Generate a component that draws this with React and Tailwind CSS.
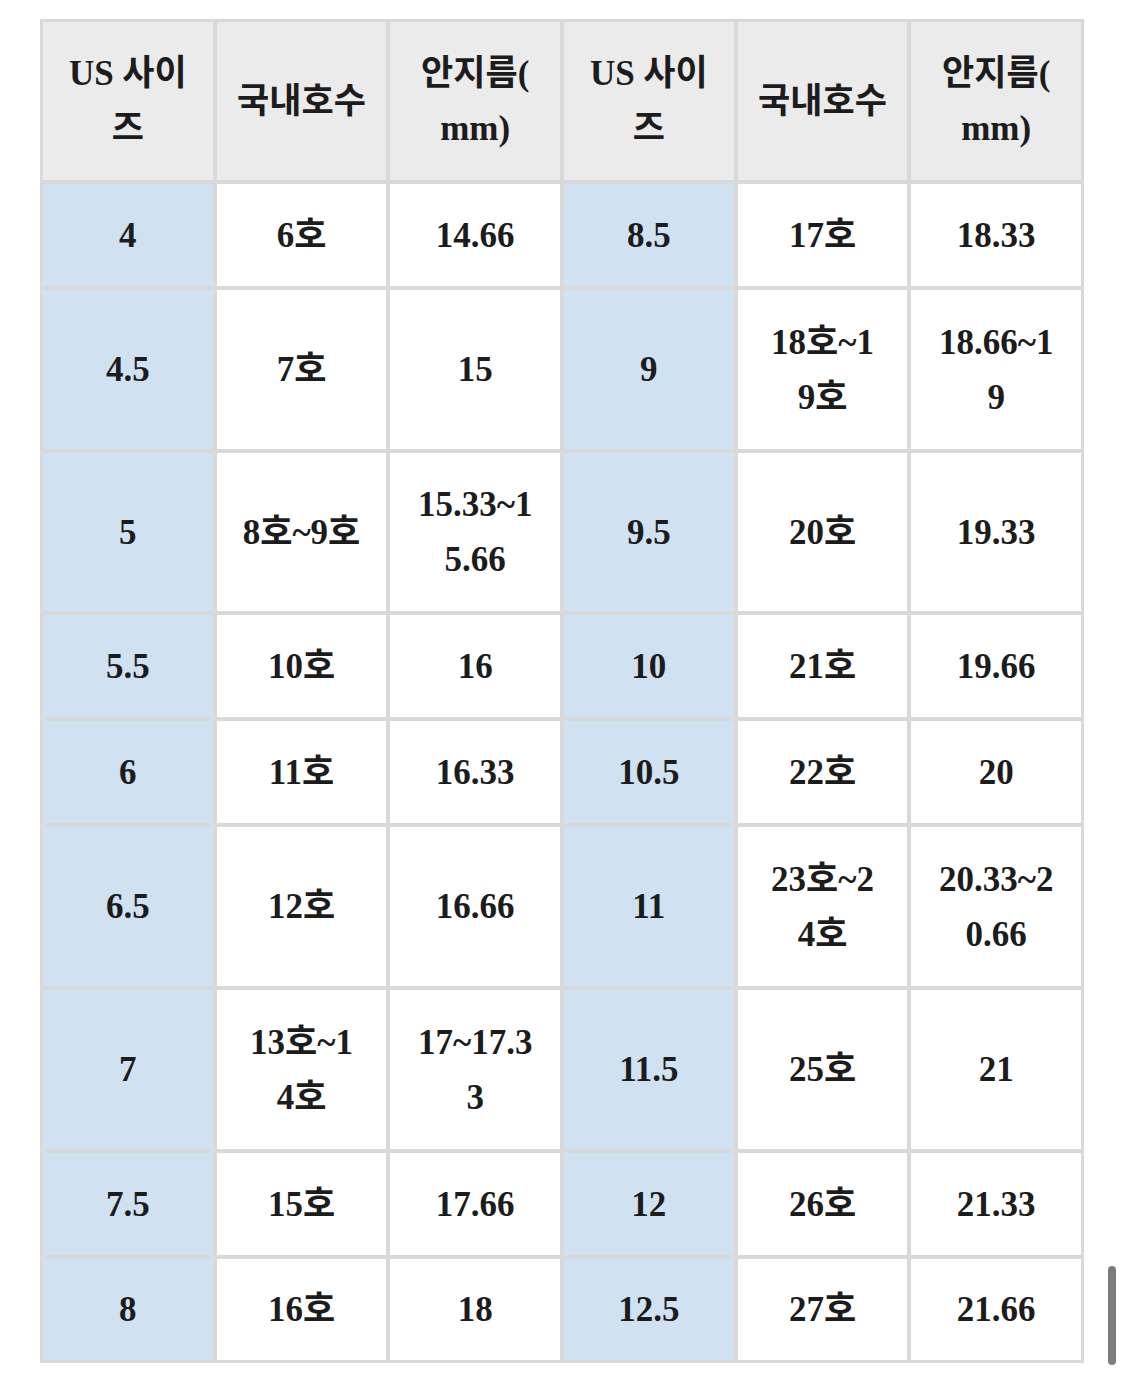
import React from 'react';

// 각 셀은 원본처럼 줄바꿈된 상태로 배열에 넣어 둠
const header = [['US 사이', '즈'], ['국내호수'], ['안지름(', 'mm)'], ['US 사이', '즈'], ['국내호수'], ['안지름(', 'mm)']];

const rows = [
  { h: 'h-[102px]', cells: [['4'], ['6호'], ['14.66'], ['8.5'], ['17호'], ['18.33']] },
  { h: 'h-[159px]', cells: [['4.5'], ['7호'], ['15'], ['9'], ['18호~1', '9호'], ['18.66~1', '9']] },
  { h: 'h-[158px]', cells: [['5'], ['8호~9호'], ['15.33~1', '5.66'], ['9.5'], ['20호'], ['19.33']] },
  { h: 'h-[102px]', cells: [['5.5'], ['10호'], ['16'], ['10'], ['21호'], ['19.66']] },
  { h: 'h-[102px]', cells: [['6'], ['11호'], ['16.33'], ['10.5'], ['22호'], ['20']] },
  { h: 'h-[159px]', cells: [['6.5'], ['12호'], ['16.66'], ['11'], ['23호~2', '4호'], ['20.33~2', '0.66']] },
  { h: 'h-[159px]', cells: [['7'], ['13호~1', '4호'], ['17~17.3', '3'], ['11.5'], ['25호'], ['21']] },
  { h: 'h-[102px]', cells: [['7.5'], ['15호'], ['17.66'], ['12'], ['26호'], ['21.33']] },
  { h: 'h-[101px]', cells: [['8'], ['16호'], ['18'], ['12.5'], ['27호'], ['21.66']] },
];

const Cell = ({ lines, className }) => (
  <div className={`flex flex-col items-center justify-center text-center ${className}`}>
    {lines.map((line, i) => (
      <span key={i} className="whitespace-nowrap">{line}</span>
    ))}
  </div>
);

const App = () => {
  return (
    <div
      className="relative w-[1125px] h-[1382px] bg-white pt-[19px] pl-[40px] text-[#1c1c1c] text-[35px] leading-[55px] font-bold"
      style={{ fontFamily: '"Liberation Serif", "Noto Sans CJK KR", serif' }}
    >
      <div className="w-[1044px] bg-[#d9d9d9] p-[3px] grid grid-cols-6 gap-[4px]">
        {header.map((lines, i) => (
          <Cell key={`h${i}`} lines={lines} className="h-[158px] bg-[#ebebeb]" />
        ))}
        {rows.map((row, r) =>
          row.cells.map((lines, c) => (
            <Cell
              key={`${r}-${c}`}
              lines={lines}
              className={`${row.h} ${c === 0 || c === 3 ? 'bg-[#d0e1f2]' : 'bg-white'}`}
            />
          ))
        )}
      </div>

      {/* 스크롤바 표시 */}
      <div className="absolute left-[1108px] top-[1266px] w-[8px] h-[99px] rounded-full bg-[#7d7d7d]" />
    </div>
  );
};

export default App;
